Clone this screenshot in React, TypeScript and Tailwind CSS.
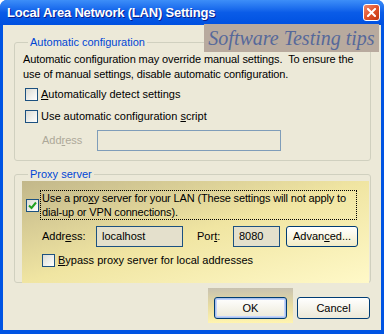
import type { ReactNode } from 'react';

const font = { fontFamily: '"Liberation Sans", Arial, sans-serif' };

function CheckBox({ checked = false }: { checked?: boolean }) {
  return (
    <span className="w-[13px] h-[13px] shrink-0 border border-[#1c5180] bg-gradient-to-br from-[#dcdcd4] to-[#ffffff] flex items-center justify-center">
      {checked && (
        <svg width="9" height="9" viewBox="0 0 9 9">
          <path d="M1 4.5 L3.5 7 L8 1.5" fill="none" stroke="#21a121" strokeWidth="2" />
        </svg>
      )}
    </span>
  );
}

function XpButton({ children, isDefault = false }: { children: ReactNode; isDefault?: boolean }) {
  return (
    <button
      className={
        'w-[73px] h-[22px] rounded-[3px] border border-[#003c74] bg-gradient-to-b from-[#ffffff] to-[#ece9d8] text-[11px] text-black flex items-center justify-center ' +
        (isDefault ? 'shadow-[inset_0_0_0_1px_#a8c1ec,inset_0_0_0_2px_#c3d3fd]' : '')
      }
    >
      {children}
    </button>
  );
}

export default function App() {
  return (
    <div style={font} className="w-[384px] h-[334px] bg-[#0054e3] rounded-t-[7px] flex flex-col text-[11px] text-black overflow-hidden">
      {/* Title bar */}
      <div className="h-[25px] shrink-0 flex items-center justify-between pl-[7px] pr-[4px] bg-gradient-to-b from-[#3d8ef8] via-[#0a5ce8] to-[#0050e0]">
        <span className="text-white font-bold text-[13px] tracking-[-0.2px] [text-shadow:1px_1px_0_#0a1e8c]">
          Local Area Network (LAN) Settings
        </span>
        <span className="w-[17px] h-[17px] mb-[1px] rounded-[3px] border border-white bg-gradient-to-br from-[#f0876a] via-[#e0532a] to-[#c2350f] flex items-center justify-center">
          <svg width="9" height="9" viewBox="0 0 9 9">
            <path d="M1 1 L8 8 M8 1 L1 8" stroke="white" strokeWidth="2" strokeLinecap="square" />
          </svg>
        </span>
      </div>

      {/* Dialog body */}
      <div className="relative flex-1 mx-[3px] mb-[4px] bg-[#ece9d8] flex flex-col pt-[11px] pl-[11px] pr-[10px]">
        {/* watermark */}
        <div className="absolute left-[201px] top-[-1px] w-[175px] h-[28px] bg-[#b8aa9e] flex items-center justify-center">
          <span style={{ fontFamily: '"Liberation Serif", "Times New Roman", serif' }} className="italic text-[20px] text-[#56689a]">
            Software Testing tips
          </span>
        </div>

        {/* Automatic configuration */}
        <fieldset className="border border-[#d0d0bf] rounded-[3px] pl-[8px] pr-[8px] pb-[9px]">
          <legend className="ml-[5px] px-[2px] text-[#0046d5] leading-[13px]">Automatic configuration</legend>
          <p className="pt-[3px] leading-[15px] tracking-[-0.1px] whitespace-nowrap">
            Automatic configuration may override manual settings.&nbsp; To ensure the
            <br />
            use of manual settings, disable automatic configuration.
          </p>
          <div className="mt-[6px] ml-[2px] flex items-center gap-[3px] h-[13px]">
            <CheckBox />
            <span><u>A</u>utomatically detect settings</span>
          </div>
          <div className="mt-[9px] ml-[2px] flex items-center gap-[3px] h-[13px]">
            <CheckBox />
            <span>Use automatic configuration <u>s</u>cript</span>
          </div>
          <div className="mt-[7px] flex items-center">
            <span className="ml-[19px] w-[55px] text-[#aca899]">Add<u>r</u>ess</span>
            <div className="w-[184px] h-[21px] border border-[#7f9db9] bg-[#ece9d8]" />
          </div>
        </fieldset>

        {/* Proxy server */}
        <fieldset className="mt-[7px] border border-[#d0d0bf] rounded-[3px] pl-[7px] pr-[1px]">
          <legend className="ml-[6px] px-[2px] text-[#0046d5] leading-[13px]">Proxy server</legend>
          <div className="mb-[-1px] pt-[9px] pb-[16px] pl-[4px] bg-gradient-to-br from-[#c2b78a] via-[#f0e5a2] to-[#fff9c8]">
            <div className="flex items-center">
              <CheckBox checked />
              <div className="ml-[1px] w-[317px] h-[30px] border border-dotted border-black px-[1px] leading-[14px] flex flex-col justify-center whitespace-nowrap tracking-[-0.15px]">
                <span>Use a pro<u>x</u>y server for your LAN (These settings will not apply to</span>
                <span>dial-up or VPN connections).</span>
              </div>
            </div>
            <div className="mt-[6px] flex items-center">
              <span className="ml-[16px] w-[54px]">Addr<u>e</u>ss:</span>
              <div className="w-[87px] h-[21px] border border-[#1c5180] bg-[#e4e0cc] flex items-center pl-[5px]">localhost</div>
              <span className="ml-[14px] w-[36px]">Por<u>t</u>:</span>
              <div className="w-[47px] h-[21px] border border-[#1c5180] bg-[#e4e0cc] flex items-center pl-[5px]">8080</div>
              <div className="ml-[6px]">
                <button className="w-[72px] h-[21px] rounded-[3px] border border-[#003c74] bg-gradient-to-b from-[#ffffff] to-[#f3ecc6] text-[11px] flex items-center justify-center">
                  Advan<u>c</u>ed...
                </button>
              </div>
            </div>
            <div className="mt-[7px] ml-[16px] flex items-center gap-[3px] h-[13px]">
              <CheckBox />
              <span><u>B</u>ypass proxy server for local addresses</span>
            </div>
          </div>
        </fieldset>

        {/* Buttons */}
        <div className="mt-[5px] flex justify-end items-start pr-[1px]">
          <div className="px-[6px] pt-[9px] pb-[4px] bg-gradient-to-b from-[#c8c2b0] via-[#e8dca0] to-[#fff4b0]">
            <XpButton isDefault>OK</XpButton>
          </div>
          <div className="ml-[4px] pt-[9px]">
            <XpButton>Cancel</XpButton>
          </div>
        </div>
      </div>
    </div>
  );
}
